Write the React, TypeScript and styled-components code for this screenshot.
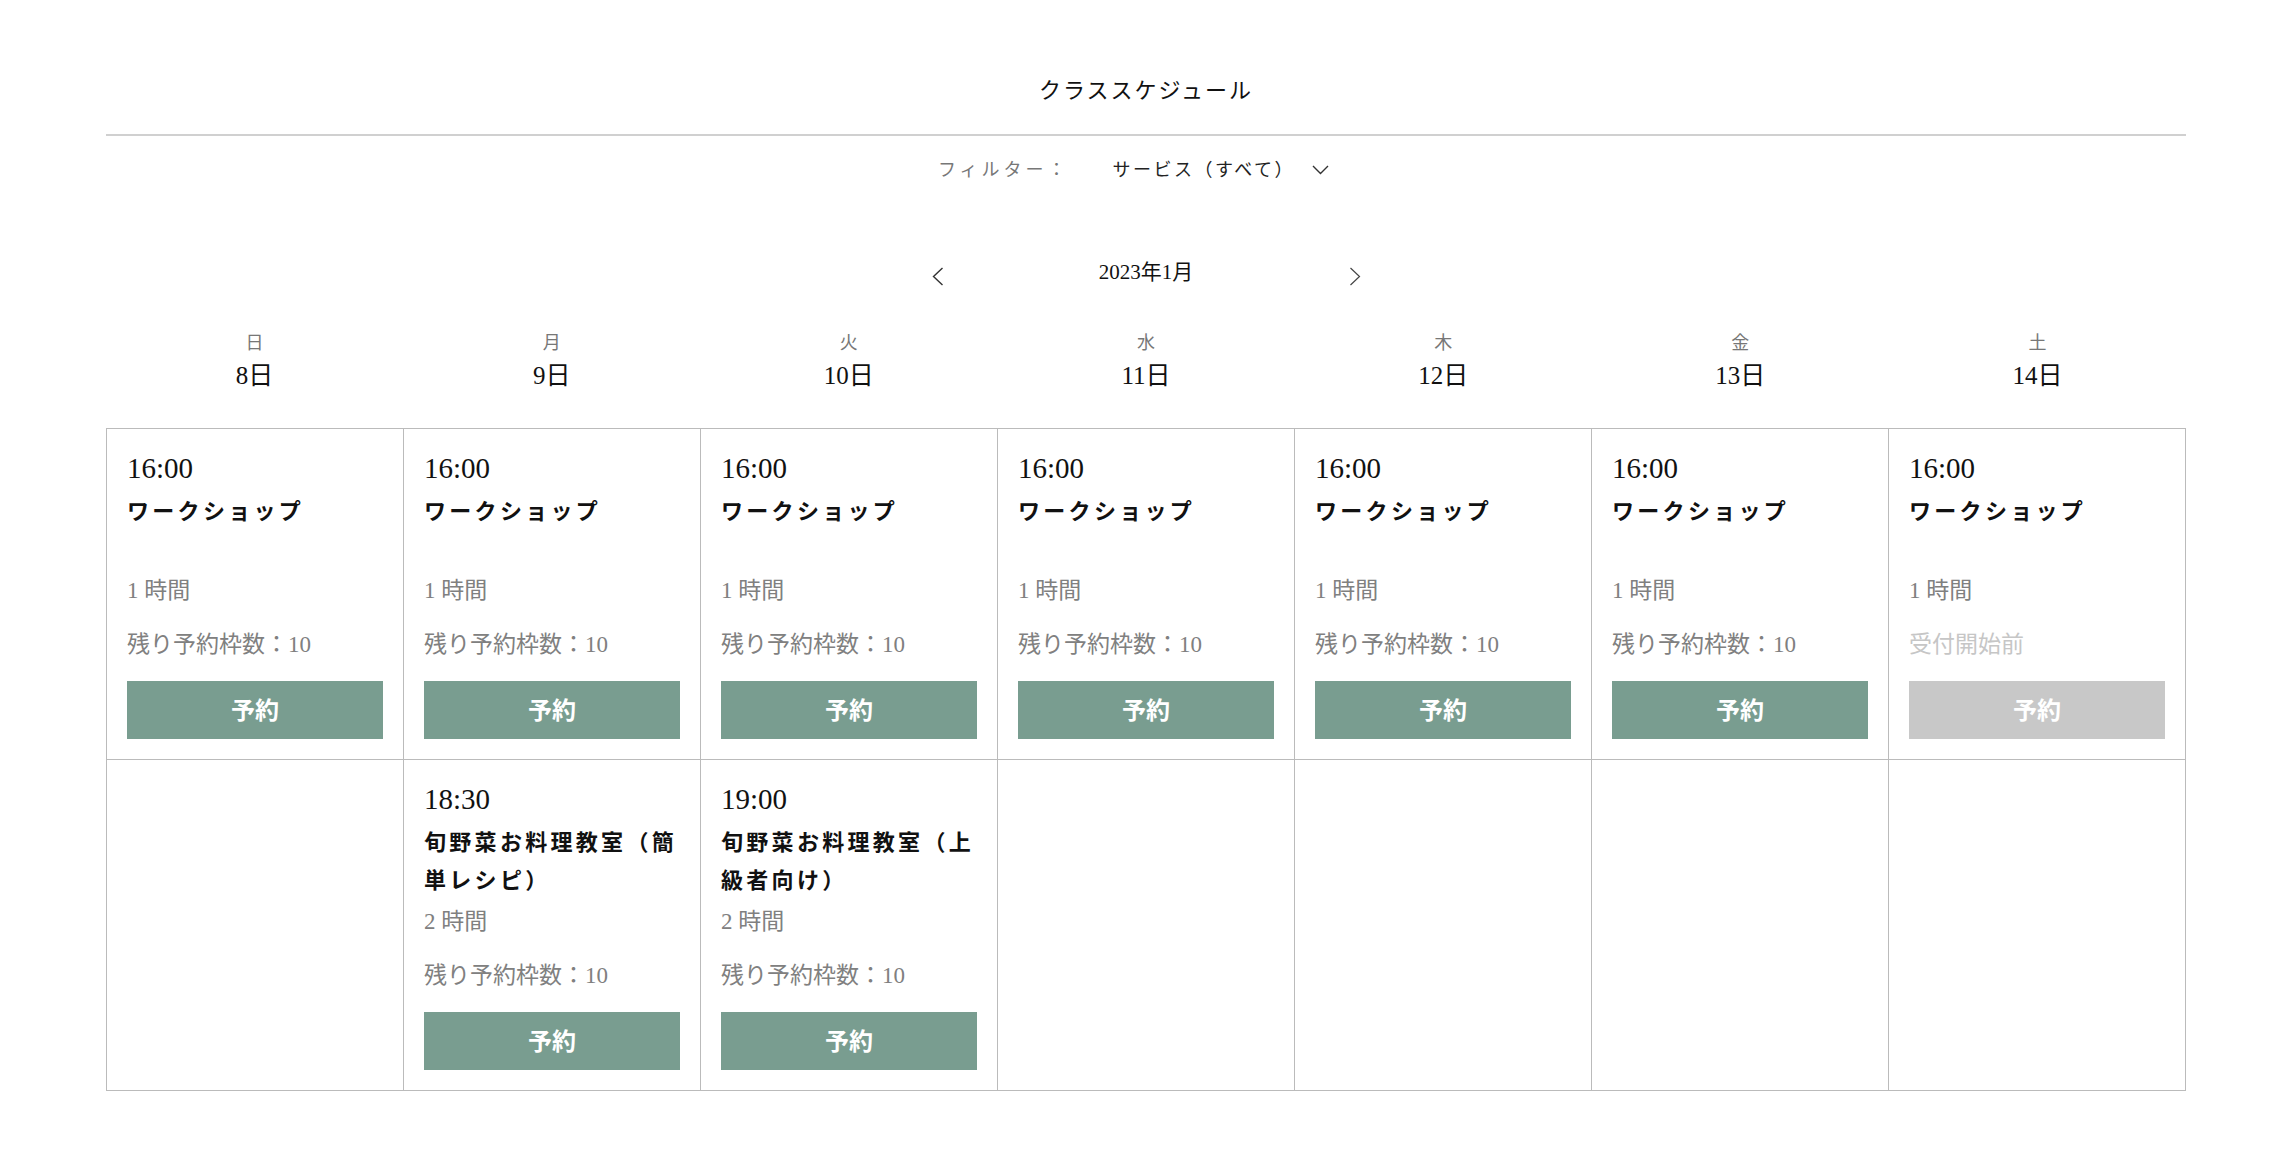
import React from 'react'
import styled, { createGlobalStyle } from 'styled-components'

const GlobalStyle = createGlobalStyle`
  body {
    margin: 0;
    background: #fff;
    color: #111;
    font-family: 'Liberation Serif', 'Noto Sans CJK JP', serif;
  }
`

interface Slot {
  time: string
  title: string
  duration: string
  remaining: string
  open: boolean
}

interface Day {
  weekday: string
  date: string
  slots: Slot[]
}

const workshop = (open = true): Slot => ({
  time: '16:00',
  title: 'ワークショップ',
  duration: '1 時間',
  remaining: open ? '残り予約枠数：10' : '受付開始前',
  open,
})

const days: Day[] = [
  { weekday: '日', date: '8日', slots: [workshop()] },
  {
    weekday: '月',
    date: '9日',
    slots: [
      workshop(),
      {
        time: '18:30',
        title: '旬野菜お料理教室（簡単レシピ）',
        duration: '2 時間',
        remaining: '残り予約枠数：10',
        open: true,
      },
    ],
  },
  {
    weekday: '火',
    date: '10日',
    slots: [
      workshop(),
      {
        time: '19:00',
        title: '旬野菜お料理教室（上級者向け）',
        duration: '2 時間',
        remaining: '残り予約枠数：10',
        open: true,
      },
    ],
  },
  { weekday: '水', date: '11日', slots: [workshop()] },
  { weekday: '木', date: '12日', slots: [workshop()] },
  { weekday: '金', date: '13日', slots: [workshop()] },
  { weekday: '土', date: '14日', slots: [workshop(false)] },
]

const ROWS = 2

export default function App() {
  return (
    <>
      <GlobalStyle />
      <Page>
        <Title>クラススケジュール</Title>
        <Divider />

        <FilterBar>
          <FilterLabel>フィルター：</FilterLabel>
          <FilterSelect type="button">
            サービス（すべて）
            <svg width="17" height="10" viewBox="0 0 17 10" fill="none">
              <polyline points="1,1 8.5,8.5 16,1" stroke="#333" strokeWidth="1.4" />
            </svg>
          </FilterSelect>
        </FilterBar>

        <MonthNav>
          <NavButton type="button" aria-label="前の月">
            <svg width="12" height="19" viewBox="0 0 12 19" fill="none">
              <polyline points="10.5,1 1.5,9.5 10.5,18" stroke="#333" strokeWidth="1.4" />
            </svg>
          </NavButton>
          <MonthLabel>2023年1月</MonthLabel>
          <NavButton type="button" aria-label="次の月">
            <svg width="12" height="19" viewBox="0 0 12 19" fill="none">
              <polyline points="1.5,1 10.5,9.5 1.5,18" stroke="#444" strokeWidth="1.2" />
            </svg>
          </NavButton>
        </MonthNav>

        <DayHeaders>
          {days.map((day) => (
            <DayHeader key={day.date}>
              <Weekday>{day.weekday}</Weekday>
              <DateText>{day.date}</DateText>
            </DayHeader>
          ))}
        </DayHeaders>

        <Schedule>
          {Array.from({ length: ROWS }).flatMap((_, row) =>
            days.map((day) => {
              const slot = day.slots[row]
              return (
                <Cell key={day.date + row}>
                  {slot && (
                    <>
                      <Time>{slot.time}</Time>
                      <SlotTitle>{slot.title}</SlotTitle>
                      <Meta>{slot.duration}</Meta>
                      <Remaining $muted={!slot.open}>{slot.remaining}</Remaining>
                      <BookButton type="button" $disabled={!slot.open} disabled={!slot.open}>
                        予約
                      </BookButton>
                    </>
                  )}
                </Cell>
              )
            }),
          )}
        </Schedule>
      </Page>
    </>
  )
}

const Page = styled.main`
  width: 2080px;
  padding: 75px 96px 60px 106px;
`

const Title = styled.h1`
  margin: 0 0 27px;
  text-align: center;
  font-size: 22px;
  line-height: 32px;
  font-weight: 400;
  letter-spacing: 2px;
  color: #111;
`

const Divider = styled.hr`
  margin: 0;
  border: none;
  height: 2px;
  background: #d0d0d0;
`

const FilterBar = styled.div`
  margin-top: 19px;
  display: flex;
  justify-content: center;
  align-items: center;
  height: 30px;
  padding-right: 25px;
`

const FilterLabel = styled.span`
  font-size: 18px;
  line-height: 30px;
  letter-spacing: 4px;
  color: #777;
  margin-right: 43px;
`

const FilterSelect = styled.button`
  display: flex;
  align-items: center;
  gap: 17px;
  padding: 0;
  border: none;
  background: none;
  font-family: inherit;
  font-size: 18px;
  line-height: 30px;
  letter-spacing: 2.5px;
  color: #222;
  cursor: pointer;
`

const MonthNav = styled.div`
  margin-top: 69px;
  height: 40px;
  display: grid;
  grid-template-columns: 24px 393px 24px;
  justify-content: center;
  align-items: center;
`

const NavButton = styled.button`
  display: flex;
  justify-content: center;
  align-items: center;
  width: 24px;
  height: 40px;
  padding: 4px 0 0;
  border: none;
  background: none;
  cursor: pointer;
`

const MonthLabel = styled.div`
  text-align: center;
  font-size: 21px;
  line-height: 40px;
  margin-top: -4px;
  color: #111;
`

const DayHeaders = styled.div`
  margin-top: 34px;
  display: grid;
  grid-template-columns: repeat(7, 1fr);
`

const DayHeader = styled.div`
  display: flex;
  flex-direction: column;
  align-items: center;
`

const Weekday = styled.span`
  font-size: 18px;
  line-height: 30px;
  color: #777;
`

const DateText = styled.span`
  font-size: 25px;
  line-height: 36px;
  color: #111;
`

const Schedule = styled.div`
  margin-top: 34px;
  display: grid;
  grid-template-columns: repeat(7, 1fr);
  border-top: 1px solid #bbb;
  border-left: 1px solid #bbb;
`

const Cell = styled.div`
  display: flex;
  flex-direction: column;
  min-width: 0;
  padding: 20px;
  border-right: 1px solid #bbb;
  border-bottom: 1px solid #bbb;
`

const Time = styled.div`
  font-size: 29px;
  line-height: 38px;
  color: #111;
`

const SlotTitle = styled.div`
  margin-top: 6px;
  min-height: 76px;
  font-size: 22px;
  line-height: 38px;
  font-weight: 700;
  letter-spacing: 3.3px;
  color: #111;
`

const Meta = styled.div`
  margin-top: 4px;
  font-size: 23px;
  line-height: 36px;
  color: #808080;
`

const Remaining = styled.div<{ $muted: boolean }>`
  margin-top: 18px;
  font-size: 23px;
  line-height: 36px;
  color: ${({ $muted }) => ($muted ? '#c6c6c6' : '#808080')};
`

const BookButton = styled.button<{ $disabled: boolean }>`
  margin-top: 18px;
  height: 58px;
  width: 100%;
  padding: 0 0 4px;
  border: none;
  background: ${({ $disabled }) => ($disabled ? '#c8c8c8' : '#799d90')};
  color: #fff;
  font-family: inherit;
  font-size: 24px;
  font-weight: 700;
  cursor: ${({ $disabled }) => ($disabled ? 'default' : 'pointer')};
`
